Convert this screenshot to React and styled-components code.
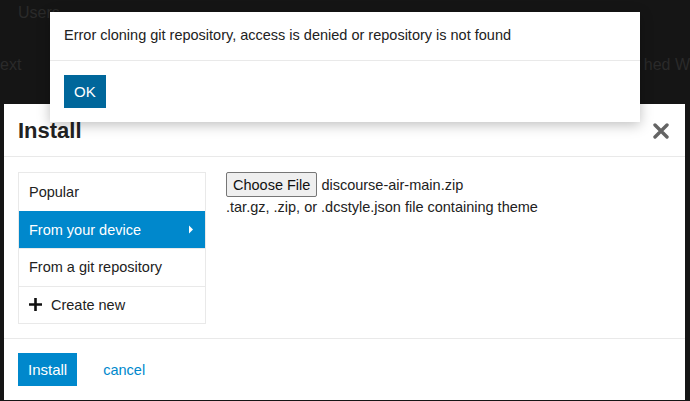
import React from "react";
import styled, { createGlobalStyle } from "styled-components";

const Global = createGlobalStyle`
  html, body { margin: 0; padding: 0; }
  body {
    width: 690px;
    height: 401px;
    overflow: hidden;
    background: #151515;
    font-family: "Liberation Sans", Arial, sans-serif;
    color: #222;
  }
`;

const Page = styled.div`
  position: relative;
  width: 690px;
  height: 401px;
  overflow: hidden;
`;

const Backdrop = styled.div`
  display: flex;
  flex-direction: column;
  gap: 34px;
  padding: 4px 0 0 0;
  color: #2a2a2a;
  font-size: 16px;
`;

const BackLine = styled.div`
  display: flex;
  justify-content: space-between;
  padding: ${(p) => p.$pad};
`;

const Modal = styled.div`
  position: absolute;
  left: 4px;
  top: 104px;
  width: 681px;
  height: 296px;
  overflow: hidden;
  background: #fff;
  display: flex;
  flex-direction: column;
  & > * { flex-shrink: 0; }
`;

const Header = styled.div`
  height: 53px;
  box-sizing: border-box;
  border-bottom: 1px solid #e9e9e9;
  display: flex;
  align-items: center;
  justify-content: space-between;
  padding: 0 15px 0 14px;
`;

const Title = styled.h3`
  margin: 0;
  font-size: 22px;
  font-weight: bold;
  color: #222;
  padding-top: 2px;
`;

const Close = styled.button`
  border: 0;
  background: none;
  padding: 0;
  width: 18px;
  height: 18px;
  display: flex;
  align-items: center;
  justify-content: center;
  margin-top: 2px;
`;

const Body = styled.div`
  display: flex;
  gap: 20px;
  padding: 15px 14px 14px 14px;
  border-bottom: 1px solid #e9e9e9;
`;

const Nav = styled.ul`
  list-style: none;
  margin: 0;
  padding: 0;
  width: 188px;
  box-sizing: border-box;
  border: 1px solid #e9e9e9;
`;

const NavItem = styled.li`
  height: 37.5px;
  box-sizing: border-box;
  display: flex;
  align-items: center;
  justify-content: space-between;
  padding: 0 11px 0 10px;
  font-size: 14.5px;
  background: ${(p) => (p.$active ? "#0088cc" : "#fff")};
  color: ${(p) => (p.$active ? "#fff" : "#222")};
  border-top: ${(p) => (p.$first ? "0" : "1px solid #e9e9e9")};
  border-top-color: ${(p) => (p.$active ? "#0088cc" : "#e9e9e9")};
`;

const ItemLabel = styled.span`
  display: flex;
  align-items: center;
  gap: 9px;
`;

const Content = styled.div`
  display: flex;
  flex-direction: column;
  gap: 2px;
  font-size: 14.5px;
  color: #222;
`;

const FileRow = styled.div`
  display: flex;
  align-items: center;
  gap: 4px;
`;

const FileButton = styled.button`
  font-family: "Liberation Sans", Arial, sans-serif;
  font-size: 14.5px;
  color: #111;
  background: #efefef;
  border: 1px solid #767676;
  border-radius: 2px;
  height: 25px;
  padding: 0 6px;
  display: flex;
  align-items: center;
`;

const Hint = styled.div`
  font-size: 14.5px;
  color: #222;
`;

const Footer = styled.div`
  display: flex;
  align-items: center;
  gap: 26px;
  padding: 14px 14px;
`;

const PrimaryButton = styled.button`
  font-family: "Liberation Sans", Arial, sans-serif;
  font-size: 15px;
  color: #fff;
  background: ${(p) => p.$bg || "#0088cc"};
  border: 0;
  height: 33px;
  padding: 0 ${(p) => p.$px || 10}px;
  display: flex;
  align-items: center;
`;

const LinkButton = styled.a`
  font-size: 14.5px;
  color: #0088cc;
  text-decoration: none;
`;

const Alert = styled.div`
  position: absolute;
  left: 50px;
  top: 12px;
  width: 590px;
  height: 110px;
  background: #fff;
  box-shadow: 0 3px 12px rgba(0, 0, 0, 0.25);
  display: flex;
  flex-direction: column;
`;

const AlertBody = styled.div`
  height: 49px;
  box-sizing: border-box;
  border-bottom: 1px solid #e9e9e9;
  display: flex;
  align-items: center;
  padding: 0 14px 2px 14px;
  font-size: 14.5px;
  color: #222;
`;

const AlertFooter = styled.div`
  padding: 14px 14px;
  display: flex;
`;

const Caret = () => (
  <svg width="6" height="9" viewBox="0 0 6 9">
    <path d="M1 0.5 L5 4.5 L1 8.5 Z" fill="#fff" />
  </svg>
);

const Plus = () => (
  <svg width="13" height="13" viewBox="0 0 13 13">
    <path d="M6.5 0 V13 M0 6.5 H13" stroke="#111" strokeWidth="2.6" />
  </svg>
);

const XIcon = () => (
  <svg width="16" height="16" viewBox="0 0 16 16">
    <path d="M2 2 L14 14 M14 2 L2 14" stroke="#646464" strokeWidth="3.4" strokeLinecap="round" />
  </svg>
);

export default function App() {
  return (
    <Page>
      <Global />
      <Backdrop>
        <BackLine $pad="0 0 0 18px">
          <span>Users</span>
        </BackLine>
        <BackLine $pad="0 0 0 0">
          <span>ext</span>
          <span>hed W</span>
        </BackLine>
      </Backdrop>

      <Modal>
        <Header>
          <Title>Install</Title>
          <Close aria-label="close">
            <XIcon />
          </Close>
        </Header>
        <Body>
          <Nav>
            <NavItem $first>Popular</NavItem>
            <NavItem $active>
              From your device
              <Caret />
            </NavItem>
            <NavItem>From a git repository</NavItem>
            <NavItem>
              <ItemLabel>
                <Plus />
                Create new
              </ItemLabel>
            </NavItem>
          </Nav>
          <Content>
            <FileRow>
              <FileButton>Choose File</FileButton>
              <span>discourse-air-main.zip</span>
            </FileRow>
            <Hint>.tar.gz, .zip, or .dcstyle.json file containing theme</Hint>
          </Content>
        </Body>
        <Footer>
          <PrimaryButton>Install</PrimaryButton>
          <LinkButton href="#">cancel</LinkButton>
        </Footer>
      </Modal>

      <Alert>
        <AlertBody>
          Error cloning git repository, access is denied or repository is not found
        </AlertBody>
        <AlertFooter>
          <PrimaryButton $bg="#00679b" $px={10}>OK</PrimaryButton>
        </AlertFooter>
      </Alert>
    </Page>
  );
}
